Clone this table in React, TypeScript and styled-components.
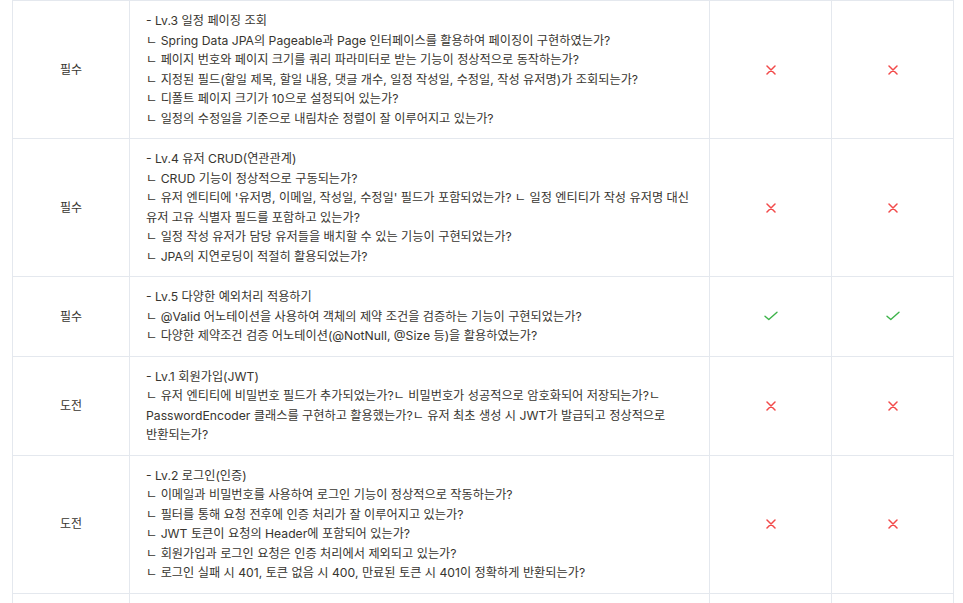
import React from 'react';
import styled, {createGlobalStyle} from 'styled-components';

const GlobalStyle = createGlobalStyle`
    html, body {
        margin: 0;
        padding: 0;
        background: #fff;
    }
    body {
        font-family: Inter, 'Noto Sans CJK KR', 'Noto Sans', sans-serif;
        color: #37352f;
    }
`;

type Mark = 'pass' | 'fail';

interface Requirement {
    level: string;
    title: string;
    lines: string[];
    self: Mark;
    review: Mark;
}

const rows: Requirement[] = [
    {
        level: '필수',
        title: '- Lv.3 일정 페이징 조회',
        lines: [
            'ㄴ Spring Data JPA의 Pageable과 Page 인터페이스를 활용하여 페이징이 구현하였는가?',
            'ㄴ 페이지 번호와 페이지 크기를 쿼리 파라미터로 받는 기능이 정상적으로 동작하는가?',
            'ㄴ 지정된 필드(할일 제목, 할일 내용, 댓글 개수, 일정 작성일, 수정일, 작성 유저명)가 조회되는가?',
            'ㄴ 디폴트 페이지 크기가 10으로 설정되어 있는가?',
            'ㄴ 일정의 수정일을 기준으로 내림차순 정렬이 잘 이루어지고 있는가?',
        ],
        self: 'fail',
        review: 'fail',
    },
    {
        level: '필수',
        title: '- Lv.4 유저 CRUD(연관관계)',
        lines: [
            'ㄴ CRUD 기능이 정상적으로 구동되는가?',
            "ㄴ 유저 엔티티에 '유저명, 이메일, 작성일, 수정일' 필드가 포함되었는가? ㄴ 일정 엔티티가 작성 유저명 대신",
            '유저 고유 식별자 필드를 포함하고 있는가?',
            'ㄴ 일정 작성 유저가 담당 유저들을 배치할 수 있는 기능이 구현되었는가?',
            'ㄴ JPA의 지연로딩이 적절히 활용되었는가?',
        ],
        self: 'fail',
        review: 'fail',
    },
    {
        level: '필수',
        title: '- Lv.5 다양한 예외처리 적용하기',
        lines: [
            'ㄴ @Valid 어노테이션을 사용하여 객체의 제약 조건을 검증하는 기능이 구현되었는가?',
            'ㄴ 다양한 제약조건 검증 어노테이션(@NotNull, @Size 등)을 활용하였는가?',
        ],
        self: 'pass',
        review: 'pass',
    },
    {
        level: '도전',
        title: '- Lv.1 회원가입(JWT)',
        lines: [
            'ㄴ 유저 엔티티에 비밀번호 필드가 추가되었는가?ㄴ 비밀번호가 성공적으로 암호화되어 저장되는가?ㄴ',
            'PasswordEncoder 클래스를 구현하고 활용했는가?ㄴ 유저 최초 생성 시 JWT가 발급되고 정상적으로',
            '반환되는가?',
        ],
        self: 'fail',
        review: 'fail',
    },
    {
        level: '도전',
        title: '- Lv.2 로그인(인증)',
        lines: [
            'ㄴ 이메일과 비밀번호를 사용하여 로그인 기능이 정상적으로 작동하는가?',
            'ㄴ 필터를 통해 요청 전후에 인증 처리가 잘 이루어지고 있는가?',
            'ㄴ JWT 토큰이 요청의 Header에 포함되어 있는가?',
            'ㄴ 회원가입과 로그인 요청은 인증 처리에서 제외되고 있는가?',
            'ㄴ 로그인 실패 시 401, 토큰 없음 시 400, 만료된 토큰 시 401이 정확하게 반환되는가?',
        ],
        self: 'fail',
        review: 'fail',
    },
];

const MarkIcon: React.FC<{mark: Mark}> = ({mark}) => {
    if (mark === 'pass') {
        return (
            <svg width="14" height="10" viewBox="0 0 14 10" fill="none">
                <path d="M1 5.2 L4.8 8.6 L13 1.2" stroke="#3db34a" strokeWidth="1.4" strokeLinecap="round" strokeLinejoin="round" />
            </svg>
        );
    }
    return (
        <svg width="10" height="10" viewBox="0 0 10 10" fill="none">
            <path d="M1 1 L9 9 M9 1 L1 9" stroke="#f24a4a" strokeWidth="1.5" strokeLinecap="round" />
        </svg>
    );
};

const App: React.FC = () => {
    return (
        <>
            <GlobalStyle />
            <Page>
                <Table>
                    <colgroup>
                        <col style={{width: 117}} />
                        <col style={{width: 580}} />
                        <col style={{width: 122}} />
                        <col style={{width: 122}} />
                    </colgroup>
                    <tbody>
                        {rows.map((row) => (
                            <tr key={row.title}>
                                <LevelCell>{row.level}</LevelCell>
                                <DescCell>
                                    <Line>{row.title}</Line>
                                    {row.lines.map((line) => (
                                        <Line key={line}>{line}</Line>
                                    ))}
                                </DescCell>
                                <MarkCell><MarkIcon mark={row.self} /></MarkCell>
                                <MarkCell><MarkIcon mark={row.review} /></MarkCell>
                            </tr>
                        ))}
                        <tr>
                            <LevelCell />
                            <DescCell><Line>&nbsp;</Line><Line>&nbsp;</Line></DescCell>
                            <MarkCell />
                            <MarkCell />
                        </tr>
                    </tbody>
                </Table>
            </Page>
        </>
    );
};

const Page = styled.div`
    padding: 0 10px 0 12px;
    width: 941px;
`;

const Table = styled.table`
    width: 941px;
    table-layout: fixed;
    border-collapse: collapse;
    font-size: 12.2px;
    line-height: 19.5px;

    td {
        border: 1px solid #e4e8ee;
    }
`;

const LevelCell = styled.td`
    text-align: center;
    vertical-align: middle;
    padding: 10px 8px;
    font-size: 12px;
`;

const DescCell = styled.td`
    padding: 10px 16px;
    vertical-align: top;
`;

const Line = styled.div`
    white-space: nowrap;
`;

const MarkCell = styled.td`
    text-align: center;
    vertical-align: middle;
    padding: 0;
    line-height: 0;
`;

export default App;
